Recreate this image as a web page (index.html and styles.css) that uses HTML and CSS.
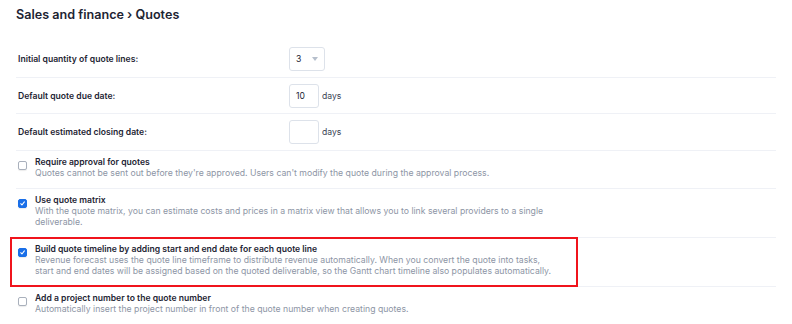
FILE: index.html
```html
<!DOCTYPE html>
<html lang="en">

<head>
    <meta charset="UTF-8">
    <title>Sales and finance - Quotes</title>
    <link rel="stylesheet" href="styles.css">
</head>

<body>
    <div class="page">
        <h1 class="page-title">Sales and finance › Quotes</h1>

        <div class="settings">
            <div class="row field">
                <div class="label">Initial quantity of quote lines:</div>
                <div class="control">
                    <div class="select">
                        <span>3</span>
                        <svg class="caret" width="6" height="4" viewBox="0 0 6 4"><path d="M0 0h6L3 4z" fill="#b6bfcc"/></svg>
                    </div>
                </div>
            </div>

            <div class="row field">
                <div class="label">Default quote due date:</div>
                <div class="control">
                    <div class="input">10</div>
                    <span class="unit">days</span>
                </div>
            </div>

            <div class="row field">
                <div class="label">Default estimated closing date:</div>
                <div class="control">
                    <div class="input"></div>
                    <span class="unit">days</span>
                </div>
            </div>

            <div class="row option">
                <span class="check"></span>
                <div class="text">
                    <div class="title">Require approval for quotes</div>
                    <div class="desc">Quotes cannot be sent out before they're approved. Users can't modify the quote during the approval process.</div>
                </div>
            </div>

            <div class="row option">
                <span class="check checked">
                    <svg width="9" height="9" viewBox="0 0 9 9"><path d="M2.2 4.8l1.6 1.6 3.1-3.9" fill="none" stroke="#fff" stroke-width="1.4" stroke-linecap="round" stroke-linejoin="round"/></svg>
                </span>
                <div class="text">
                    <div class="title">Use quote matrix</div>
                    <div class="desc">With the quote matrix, you can estimate costs and prices in a matrix view that allows you to link several providers to a single<br>deliverable.</div>
                </div>
            </div>

            <div class="row option highlighted">
                <span class="check checked">
                    <svg width="9" height="9" viewBox="0 0 9 9"><path d="M2.2 4.8l1.6 1.6 3.1-3.9" fill="none" stroke="#fff" stroke-width="1.4" stroke-linecap="round" stroke-linejoin="round"/></svg>
                </span>
                <div class="text">
                    <div class="title">Build quote timeline by adding start and end date for each quote line</div>
                    <div class="desc">Revenue forecast uses the quote line timeframe to distribute revenue automatically. When you convert the quote into tasks,<br>start and end dates will be assigned based on the quoted deliverable, so the Gantt chart timeline also populates automatically.</div>
                </div>
            </div>

            <div class="row option last">
                <span class="check"></span>
                <div class="text">
                    <div class="title">Add a project number to the quote number</div>
                    <div class="desc">Automatically insert the project number in front of the quote number when creating quotes.</div>
                </div>
            </div>
        </div>
    </div>
</body>

</html>
```

FILE: styles.css
```css
html,
body {
    margin: 0;
    background: #fff;
}

body {
    font-family: Inter, "Noto Sans", sans-serif;
    color: #1d2433;
}

.page {
    padding: 7px 16px 0 16px;
    width: 760px;
}

.page-title {
    margin: 0 0 18px 0;
    font-size: 12.6px;
    line-height: 16px;
    font-weight: 600;
}

.row {
    border-bottom: 1px solid #eff1f6;
}

.row.last {
    border-bottom: none;
}

/* rows with an input on the right */
.field {
    display: flex;
    align-items: center;
    height: 35.7px;
    padding-left: 2px;
}

.label {
    width: 271px;
    font-size: 8.6px;
    font-weight: 600;
}

.control {
    display: flex;
    align-items: center;
    gap: 3px;
}

.select,
.input {
    box-sizing: border-box;
    height: 24px;
    border: 1px solid #dde2ea;
    border-radius: 3px;
    font-size: 8.6px;
    display: flex;
    align-items: center;
    padding-left: 6px;
}

.select {
    width: 36px;
    justify-content: space-between;
    padding-right: 6px;
}

.input {
    width: 30px;
}

.unit {
    font-size: 8.6px;
    color: #3a4254;
}

/* rows with a checkbox */
.option {
    display: flex;
    gap: 8px;
    padding: 6px 0 9px 2px;
    position: relative;
}

.check {
    box-sizing: border-box;
    flex: none;
    width: 9px;
    height: 9px;
    margin-top: 4px;
    border: 1px solid #a9b0bc;
    border-radius: 2px;
    background: #fff;
    box-shadow: 0 1px 1px rgba(0, 0, 0, 0.08);
    display: flex;
    align-items: center;
    justify-content: center;
}

.check.checked {
    background: #1a6fe8;
    border-color: #1a6fe8;
}

.check svg {
    display: block;
}

.title {
    font-size: 8.6px;
    line-height: 11px;
    font-weight: 600;
}

.desc {
    font-size: 8.7px;
    line-height: 11px;
    color: #8d95a5;
}

/* red annotation frame */
.highlighted::after {
    content: "";
    position: absolute;
    left: -6px;
    top: -1px;
    width: 568px;
    height: 50px;
    border: 2px solid #f0141c;
    box-sizing: border-box;
}
```
